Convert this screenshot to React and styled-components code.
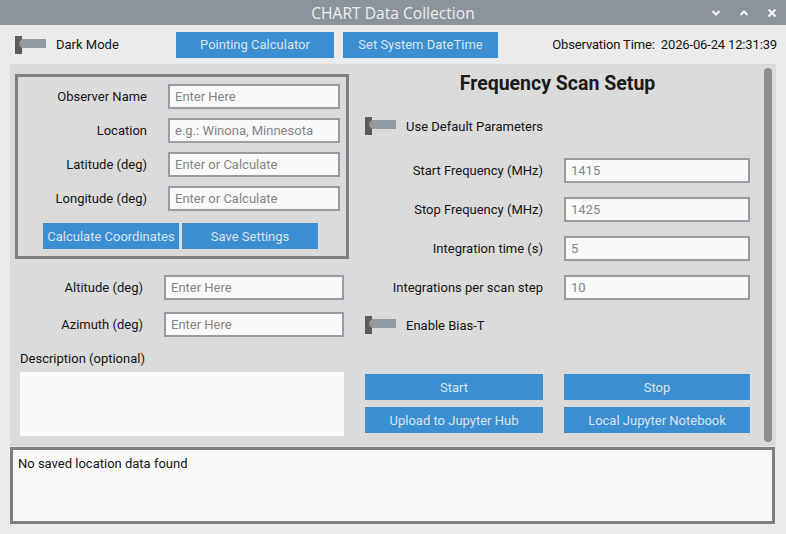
import React from "react";
import styled, { createGlobalStyle } from "styled-components";

const Global = createGlobalStyle`
  html, body { margin: 0; padding: 0; background: #ebebeb; }
  body { font-family: Roboto, "Noto Sans", "Liberation Sans", sans-serif; }
  * { box-sizing: border-box; }
`;

const Window = styled.div`
  width: 786px;
  height: 534px;
  background: #ebebeb;
  display: flex;
  flex-direction: column;
  overflow: hidden;
`;

const TitleBar = styled.div`
  height: 25px;
  background: #8b939c;
  display: grid;
  grid-template-columns: 1fr auto 1fr;
  align-items: center;
`;

const Title = styled.div`
  grid-column: 2;
  font-family: "Open Sans", "Noto Sans", sans-serif;
  font-size: 15.6px;
  font-weight: 400;
  color: #eef0f2;
`;

const WinControls = styled.div`
  grid-column: 3;
  justify-self: end;
  display: flex;
  align-items: center;
  gap: 18px;
  padding-right: 9px;
`;

const TopBar = styled.div`
  height: 39px;
  display: flex;
  align-items: center;
  padding: 0 9px 0 15px;
`;

const SwitchGroup = styled.div`
  display: flex;
  align-items: center;
  gap: 10px;
  width: ${(p) => p.$width || "auto"};
  margin-top: ${(p) => p.$mt || 0}px;
`;

const Text = styled.span`
  font-size: 13px;
  color: #141414;
  white-space: pre;
`;

const Button = styled.button`
  all: unset;
  box-sizing: border-box;
  width: ${(p) => p.$w}px;
  height: 26px;
  background: #3b8ed0;
  color: #dce4ee;
  font-family: Roboto, "Noto Sans", sans-serif;
  font-size: 13px;
  display: flex;
  align-items: center;
  justify-content: center;
  white-space: nowrap;
`;

const TopButtons = styled.div`
  display: flex;
  gap: 9px;
`;

const ObsTime = styled(Text)`
  margin-left: auto;
  letter-spacing: -0.15px;
`;

const Panel = styled.div`
  margin: 0 10px;
  height: 382px;
  background: #dbdbdb;
  display: flex;
`;

const LeftColumn = styled.div`
  width: 345px;
  padding-top: 10px;
  display: flex;
  flex-direction: column;
`;

const FramedBox = styled.div`
  margin-left: 5px;
  width: 334px;
  height: 185px;
  border: 3px solid #7f7f7f;
  padding: 7px 6px 0 0;
  display: flex;
  flex-direction: column;
  gap: 9px;
`;

const FieldRow = styled.div`
  display: grid;
  grid-template-columns: ${(p) => p.$cols};
  column-gap: 21px;
  align-items: center;
  height: 25px;
`;

const Label = styled.label`
  font-size: 13px;
  color: #141414;
  text-align: right;
  white-space: nowrap;
`;

const Input = styled.div`
  height: 25px;
  border: 2px solid #979da2;
  background: #f9f9fa;
  color: #858585;
  font-size: 13px;
  display: flex;
  align-items: center;
  padding-left: 5px;
  white-space: nowrap;
  overflow: hidden;
`;

const ButtonRow = styled.div`
  display: flex;
  gap: 3px;
  margin: 3px 0 0 25px;
`;

const LowerForm = styled.div`
  margin: 16px 0 0 10px;
  display: flex;
  flex-direction: column;
  gap: 12px;
`;

const DescLabel = styled(Text)`
  margin: 14px 0 0 10px;
  line-height: 16px;
`;

const DescBox = styled.div`
  margin: 5px 0 0 10px;
  width: 324px;
  height: 64px;
  background: #f9f9fa;
`;

const RightColumn = styled.div`
  flex: 1;
  padding: 9px 10px 0 10px;
  display: flex;
  flex-direction: column;
`;

const SectionTitle = styled.div`
  font-size: 19.5px;
  font-weight: 700;
  line-height: 22px;
  color: #1a1a1a;
  text-align: center;
  margin: 0 -10px;
`;

const FreqForm = styled.div`
  margin-top: 23px;
  display: flex;
  flex-direction: column;
  gap: 14px;
`;

const ActionGrid = styled.div`
  margin-top: 40px;
  display: grid;
  grid-template-columns: 178px 186px;
  column-gap: 21px;
  row-gap: 7px;
`;

const Scrollbar = styled.div`
  width: 8px;
  margin: 4px;
  border-radius: 4px;
  background: #8c8c8c;
`;

const LogBox = styled.div`
  margin: 1px 11px 0 10px;
  height: 77px;
  border: 3px solid #7f7f7f;
  background: #f9f9fa;
  padding: 6px 5px;
  font-size: 13px;
  color: #141414;
`;

const Switch = () => (
  <svg width="31" height="18" viewBox="0 0 31 18">
    <rect x="0" y="0" width="7" height="18" fill="#5c5c5c" />
    <polygon points="7,3 31,3 31,12 7,12 4.5,9.5 4.5,5.5" fill="#939ba2" />
  </svg>
);

const Chevron = ({ up }) => (
  <svg width="10" height="8" viewBox="0 0 10 8">
    <polyline
      points={up ? "1.5,6 5,2.5 8.5,6" : "1.5,2 5,5.5 8.5,2"}
      fill="none"
      stroke="#f4f5f6"
      strokeWidth="2"
    />
  </svg>
);

const CloseIcon = () => (
  <svg width="10" height="10" viewBox="0 0 10 10">
    <path d="M1.5 1.5 L8.5 8.5 M8.5 1.5 L1.5 8.5" stroke="#f4f5f6" strokeWidth="2.2" />
  </svg>
);

const leftCols = "129px 172px";
const lowerCols = "123px 180px";
const rightCols = "178px 186px";

export default function App() {
  return (
    <Window>
      <Global />
      <TitleBar>
        <Title>CHART Data Collection</Title>
        <WinControls>
          <Chevron />
          <Chevron up />
          <CloseIcon />
        </WinControls>
      </TitleBar>

      <TopBar>
        <SwitchGroup $width="161px">
          <Switch />
          <Text>Dark Mode</Text>
        </SwitchGroup>
        <TopButtons>
          <Button $w={158}>Pointing Calculator</Button>
          <Button $w={155}>Set System DateTime</Button>
        </TopButtons>
        <ObsTime>{"Observation Time:  2026-06-24 12:31:39"}</ObsTime>
      </TopBar>

      <Panel>
        <LeftColumn>
          <FramedBox>
            <FieldRow $cols={leftCols}>
              <Label>Observer Name</Label>
              <Input>Enter Here</Input>
            </FieldRow>
            <FieldRow $cols={leftCols}>
              <Label>Location</Label>
              <Input>e.g.: Winona, Minnesota</Input>
            </FieldRow>
            <FieldRow $cols={leftCols}>
              <Label>Latitude (deg)</Label>
              <Input>Enter or Calculate</Input>
            </FieldRow>
            <FieldRow $cols={leftCols}>
              <Label>Longitude (deg)</Label>
              <Input>Enter or Calculate</Input>
            </FieldRow>
            <ButtonRow>
              <Button $w={136}>Calculate Coordinates</Button>
              <Button $w={136}>Save Settings</Button>
            </ButtonRow>
          </FramedBox>

          <LowerForm>
            <FieldRow $cols={lowerCols}>
              <Label>Altitude (deg)</Label>
              <Input>Enter Here</Input>
            </FieldRow>
            <FieldRow $cols={lowerCols}>
              <Label>Azimuth (deg)</Label>
              <Input>Enter Here</Input>
            </FieldRow>
          </LowerForm>
          <DescLabel>Description (optional)</DescLabel>
          <DescBox />
        </LeftColumn>

        <RightColumn>
          <SectionTitle>Frequency Scan Setup</SectionTitle>
          <SwitchGroup $mt={22}>
            <Switch />
            <Text>Use Default Parameters</Text>
          </SwitchGroup>
          <FreqForm>
            <FieldRow $cols={rightCols}>
              <Label>Start Frequency (MHz)</Label>
              <Input>1415</Input>
            </FieldRow>
            <FieldRow $cols={rightCols}>
              <Label>Stop Frequency (MHz)</Label>
              <Input>1425</Input>
            </FieldRow>
            <FieldRow $cols={rightCols}>
              <Label>Integration time (s)</Label>
              <Input>5</Input>
            </FieldRow>
            <FieldRow $cols={rightCols}>
              <Label>Integrations per scan step</Label>
              <Input>10</Input>
            </FieldRow>
          </FreqForm>
          <SwitchGroup $mt={16}>
            <Switch />
            <Text>Enable Bias-T</Text>
          </SwitchGroup>
          <ActionGrid>
            <Button $w={178}>Start</Button>
            <Button $w={186}>Stop</Button>
            <Button $w={178}>Upload to Jupyter Hub</Button>
            <Button $w={186}>Local Jupyter Notebook</Button>
          </ActionGrid>
        </RightColumn>
        <Scrollbar />
      </Panel>

      <LogBox>No saved location data found</LogBox>
    </Window>
  );
}
